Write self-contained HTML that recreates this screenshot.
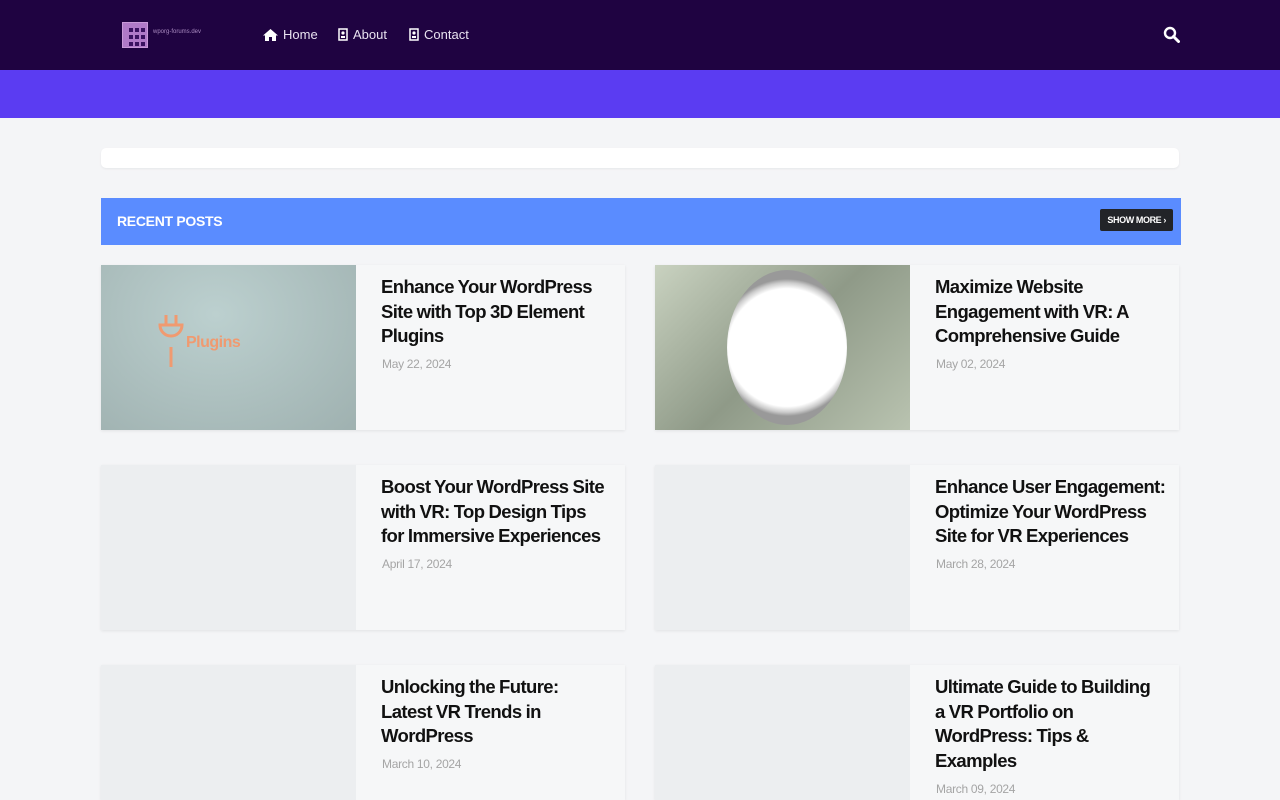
<!DOCTYPE html>
<html><head><meta charset="utf-8"><style>
*{box-sizing:border-box;margin:0;padding:0}
html,body{width:1280px;height:800px;overflow:hidden}
body{background:#f4f5f7;font-family:"Liberation Sans",sans-serif;position:relative}
.hdr{position:absolute;left:0;top:0;width:1280px;height:70px;background:#1f0341}
.band{position:absolute;left:0;top:70px;width:1280px;height:48px;background:#5b3cf2}
.logo{position:absolute;left:122px;top:22px;width:26px;height:26px;border:1px solid #c99ad9;background:#b07ac8;display:grid;grid-template-columns:repeat(3,4px);gap:2px;padding:5px 0 0 6px}
.logo i{display:block;width:4px;height:4px;background:#3a1260}
.lt{position:absolute;left:153px;top:29px;font-size:6px;color:#a98ac0}
.nav{position:absolute;top:27px;font-size:13px;color:#e8e2f0;display:flex;align-items:center;gap:5px}
.bar{position:absolute;left:101px;top:148px;width:1078px;height:20px;background:#fff;border-radius:5px;box-shadow:0 1px 2px rgba(0,0,0,.06)}
.rp{position:absolute;left:101px;top:198px;width:1080px;height:47px;background:#5a8cff}
.rp span{position:absolute;left:16px;top:15px;color:#fff;font-weight:bold;font-size:14px;letter-spacing:-.3px}
.sm{position:absolute;right:8px;top:11px;background:#222428;color:#fff;font-size:9px;font-weight:bold;padding:6px 7px;border-radius:2px;letter-spacing:-.4px}
.card{position:absolute;width:524px;height:165px;background:#f6f7f8;box-shadow:0 1px 3px rgba(0,0,0,.08)}
.img{position:absolute;left:0;top:0;width:255px;height:165px;background:#eceef0}
.t{position:absolute;left:280px;top:10px;white-space:nowrap;font-size:18.5px;line-height:24.5px;color:#111;font-weight:bold;letter-spacing:-.6px;word-spacing:-.5px}
.d{position:absolute;left:281px;font-size:12px;color:#a5a5a5;letter-spacing:-.3px}
</style></head><body>
<div class="hdr">
<div class="logo"><i></i><i></i><i></i><i></i><i></i><i></i><i></i><i></i><i></i></div>
<div class="lt">wporg-forums.dev</div>
<div class="nav" style="left:263px"><svg width="15" height="12" viewBox="0 0 15 12"><path d="M7.5 0L0 6.5h2V12h4V8h3v4h4V6.5h2z" fill="#fff"/></svg>Home</div>
<div class="nav" style="left:338px"><svg width="10" height="13" viewBox="0 0 10 13"><rect x="1" y="1" width="8" height="11" fill="none" stroke="#fff" stroke-width="1.5"/><circle cx="5" cy="5" r="1.6" fill="#fff"/><rect x="3" y="8" width="4" height="2" fill="#fff"/></svg>About</div>
<div class="nav" style="left:409px"><svg width="10" height="13" viewBox="0 0 10 13"><rect x="1" y="1" width="8" height="11" fill="none" stroke="#fff" stroke-width="1.5"/><circle cx="5" cy="5" r="1.6" fill="#fff"/><rect x="3" y="8" width="4" height="2" fill="#fff"/></svg>Contact</div>
<svg style="position:absolute;left:1163px;top:26px" width="17" height="17" viewBox="0 0 17 17"><circle cx="7" cy="7" r="5" fill="none" stroke="#fff" stroke-width="2.4"/><path d="M10.5 10.5l5 5" stroke="#fff" stroke-width="3" stroke-linecap="round"/></svg>
</div>
<div class="band"></div>
<div class="bar"></div>
<div class="rp"><span>RECENT POSTS</span><div class="sm">SHOW MORE ›</div></div>

<div class="card" style="left:101px;top:265px"><div class="img" style="background:radial-gradient(ellipse at 45% 30%,#bcd0cf,#9fb1b0)">
<svg style="position:absolute;left:55px;top:48px" width="120" height="60"><path d="M10 2v10M20 2v10M4 12h22a11 11 0 0 1-22 0zM15 34v20" stroke="#f09a70" stroke-width="3" fill="none"/><text x="30" y="34" font-size="16" font-weight="bold" fill="#f09a70" font-family="Liberation Sans" letter-spacing="-.5">Plugins</text></svg></div>
<div class="t">Enhance Your WordPress<br>Site with Top 3D Element<br>Plugins</div><div class="d" style="top:92px">May 22, 2024</div></div>

<div class="card" style="left:655px;top:265px"><div class="img" style="background:linear-gradient(135deg,#c9d2c0,#8f9a88 50%,#b9c3b0)">
<div style="position:absolute;left:72px;top:5px;width:120px;height:155px;border-radius:50%;background:radial-gradient(circle,#fff 60%,#ccc 66%,#999 70%)"></div></div>
<div class="t">Maximize Website<br>Engagement with VR: A<br>Comprehensive Guide</div><div class="d" style="top:92px">May 02, 2024</div></div>

<div class="card" style="left:101px;top:465px"><div class="img"></div>
<div class="t">Boost Your WordPress Site<br>with VR: Top Design Tips<br>for Immersive Experiences</div><div class="d" style="top:92px">April 17, 2024</div></div>

<div class="card" style="left:655px;top:465px"><div class="img"></div>
<div class="t">Enhance User Engagement:<br>Optimize Your WordPress<br>Site for VR Experiences</div><div class="d" style="top:92px">March 28, 2024</div></div>

<div class="card" style="left:101px;top:665px;height:135px"><div class="img" style="height:135px"></div>
<div class="t">Unlocking the Future:<br>Latest VR Trends in<br>WordPress</div><div class="d" style="top:92px">March 10, 2024</div></div>

<div class="card" style="left:655px;top:665px;height:135px"><div class="img" style="height:135px"></div>
<div class="t">Ultimate Guide to Building<br>a VR Portfolio on<br>WordPress: Tips &amp;<br>Examples</div><div class="d" style="top:117px">March 09, 2024</div></div>
</body></html>
